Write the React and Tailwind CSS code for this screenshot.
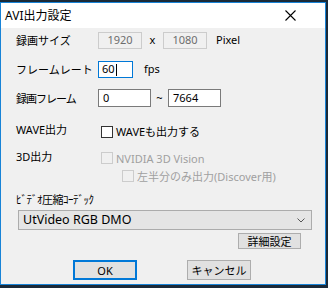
import React from 'react'

const ui = { fontFamily: '"Noto Sans", "Noto Sans CJK JP", sans-serif' }

const Check = ({ disabled }) => (
  <div
    className={`w-[12px] h-[12px] border shrink-0 ${
      disabled ? 'border-[#cccccc] bg-[#f0f0f0]' : 'border-[#333333] bg-white'
    }`}
  />
)

const Label = ({ children }) => (
  <div className="w-[82px] shrink-0 text-[11px] leading-none text-black">{children}</div>
)

export default function App() {
  return (
    <div className="w-[328px] h-[288px] bg-[#1b2a38] pt-[2px] overflow-hidden" style={ui}>
      <div className="w-[326px] border border-[#1883d7] bg-white">
        {/* Title bar */}
        <div className="h-[25px] flex items-center justify-between pl-[4px] pr-[29px] bg-white">
          <span className="text-[12px] leading-none text-black">AVI出力設定</span>
          <svg width="11" height="11" viewBox="0 0 11 11">
            <path d="M0.5 0.5 L10.5 10.5 M10.5 0.5 L0.5 10.5" stroke="#000" strokeWidth="1.1" />
          </svg>
        </div>

        {/* Body */}
        <div className="h-[256px] bg-[#f0f0f0] flex flex-col">
          {/* 録画サイズ */}
          <div className="mt-[4px] h-[17px] flex items-center pl-[15px]">
            <Label>録画サイズ</Label>
            <div className="w-[44px] h-[17px] border border-[#cccccc] flex items-center justify-center text-[11px] text-[#6d6d6d]">1920</div>
            <span className="w-[21px] text-center text-[11px] text-black">x</span>
            <div className="w-[44px] h-[17px] border border-[#cccccc] flex items-center justify-center text-[11px] text-[#6d6d6d]">1080</div>
            <span className="ml-[9px] text-[11px] text-black">Pixel</span>
          </div>

          {/* フレームレート */}
          <div className="mt-[12px] h-[17px] flex items-center pl-[15px]">
            <Label>フレームレート</Label>
            <div className="w-[35px] h-[17px] border border-[#0078d7] bg-white flex items-center pl-[3px] text-[11px] text-black">
              60<span className="w-px h-[12px] bg-black ml-px" />
            </div>
            <span className="ml-[11px] text-[11px] text-black">fps</span>
          </div>

          {/* 録画フレーム */}
          <div className="mt-[11px] h-[18px] flex items-center pl-[15px]">
            <div className="w-[82px] shrink-0 text-[11px] leading-none text-black tracking-[-1px]">録画フレーム</div>
            <div className="w-[53px] h-[18px] border border-[#7a7a7a] bg-white flex items-center pl-[4px] text-[11px] text-black">0</div>
            <span className="w-[17px] text-center text-[11px] text-black">~</span>
            <div className="w-[53px] h-[18px] border border-[#7a7a7a] bg-white flex items-center pl-[4px] text-[11px] text-black">7664</div>
          </div>

          {/* WAVE出力 */}
          <div className="mt-[18px] h-[13px] flex items-center pl-[15px]">
            <div className="w-[82px] shrink-0 text-[11px] leading-none text-black -mt-[4px]">WAVE出力</div>
            <div className="ml-[3px]"><Check /></div>
            <span className="ml-[3px] text-[11px] leading-none text-black">WAVEも出力する</span>
          </div>

          {/* 3D出力 */}
          <div className="mt-[14px] h-[12px] flex items-center pl-[15px]">
            <div className="w-[82px] shrink-0 text-[11px] leading-none text-black -mt-[4px]">3D出力</div>
            <div className="ml-[3px]"><Check disabled /></div>
            <span className="ml-[3px] text-[11px] leading-none text-[#a0a0a0]">NVIDIA 3D Vision</span>
          </div>

          <div className="mt-[6px] h-[12px] flex items-center pl-[121px]">
            <Check disabled />
            <span className="ml-[3px] text-[11px] leading-none text-[#a0a0a0]">左半分のみ出力(Discover用)</span>
          </div>

          {/* ビデオ圧縮コーデック */}
          <div className="mt-[10px] h-[14px] flex items-center pl-[15px]">
            <span className="text-[11px] leading-none text-black tracking-[-0.5px]">ﾋﾞﾃﾞｵ圧縮ｺｰﾃﾞｯｸ</span>
          </div>

          <div className="mt-[4px] ml-[17px] w-[294px] h-[20px] border border-[#acacac] bg-[#e5e5e5] flex items-center justify-between pl-[4px] pr-[6px]">
            <span className="text-[12.5px] leading-none text-black">UtVideo RGB DMO</span>
            <svg width="8" height="5" viewBox="0 0 8 5">
              <path d="M0.5 0.5 L4 4 L7.5 0.5" fill="none" stroke="#555" strokeWidth="1" />
            </svg>
          </div>

          <div className="mt-[3px] ml-[237px] w-[63px] h-[16px] border border-[#adadad] bg-[#e1e1e1] flex items-center justify-center text-[11px] leading-none text-black">
            詳細設定
          </div>

          {/* OK / Cancel */}
          <div className="mt-[11px] flex pl-[72px] gap-[50px]">
            <div className="w-[64px] h-[20px] border-2 border-[#0078d7] bg-[#e1e1e1] flex items-center justify-center text-[11px] leading-none text-black">
              OK
            </div>
            <div className="w-[64px] h-[20px] border border-[#adadad] bg-[#e1e1e1] flex items-center justify-center text-[11px] leading-none text-black">
              キャンセル
            </div>
          </div>
        </div>
      </div>
    </div>
  )
}
